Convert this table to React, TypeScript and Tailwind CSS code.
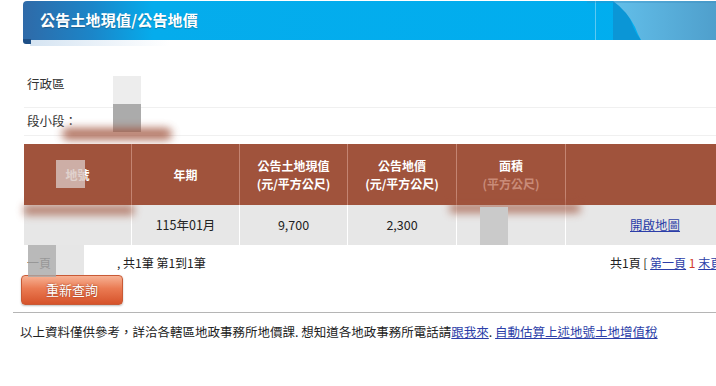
import React from 'react';

const cols = [
  { w: 'w-[108px]', h: ['地號'] },
  { w: 'w-[108px]', h: ['年期'] },
  { w: 'w-[108px]', h: ['公告土地現值', '(元/平方公尺)'] },
  { w: 'w-[109px]', h: ['公告地價', '(元/平方公尺)'] },
  { w: 'w-[109px]', h: ['面積', '(平方公尺)'] },
  { w: 'w-[160px]', h: [] },
];

export default function App() {
  return (
    <div className="relative w-[716px] h-[386px] overflow-hidden bg-white text-[#222] font-['Noto_Sans_CJK_TC','Noto_Sans',sans-serif]">
      {/* title bar */}
      <div className="relative ml-[23px] mt-[1px] h-[39px] rounded-tl-[4px] bg-[linear-gradient(90deg,#2f6aa8_0px,#1b86c9_70px,#05acec_130px,#00aeef_100%)] flex items-center pl-[17px]">
        <span className="text-white text-[15px] font-bold tracking-[0.2px] [text-shadow:0_1px_1px_rgba(0,0,0,0.25)]">
          公告土地現值/公告地價
        </span>
        <div className="absolute left-[572px] top-0 h-full w-px bg-[#5cc9f2]" />
        <svg className="absolute right-0 top-0" width="129" height="39" viewBox="0 0 129 39">
          <defs>
            <linearGradient id="lt" x1="0" x2="1" y1="0" y2="0">
              <stop offset="0" stopColor="#62bfea" />
              <stop offset="1" stopColor="#4f9fcc" />
            </linearGradient>
          </defs>
          <path d="M26 0 Q38 6 44 20 Q48 32 54 39 L26 39 Z" fill="#0b96d6" />
          <path d="M26 0 Q40 10 48 26 Q51 34 54 39 L129 39 L129 0 Z" fill="url(#lt)" />
          <rect x="0" y="0" width="129" height="2" fill="#3a8cc0" opacity="0.35" />
        </svg>
        <div className="absolute left-0 top-[38px] h-[5px] w-[8px] bg-[#1d4f86] rounded-bl-[3px]" />
      </div>
      <div className="ml-[30px] h-[6px] w-[140px] bg-[linear-gradient(90deg,#d5e4f2,#ffffff)]" />

      {/* query rows */}
      <div className="ml-[24px] mt-[16px] text-[12.5px] text-[#333]">
        <div className="h-[46px] flex items-center pl-[3px] border-b border-[#f0f0f0]">行政區</div>
        <div className="h-[28px] flex items-center pl-[3px] border-b border-[#f0f0f0]">段小段：</div>
      </div>

      {/* result table */}
      <div className="ml-[24px] mt-[8px] flex flex-col">
        <div className="flex h-[61px] bg-[#a0533c] text-white text-[12px] font-bold">
          {cols.map((c, i) => (
            <div
              key={i}
              className={`${c.w} shrink-0 flex flex-col items-center justify-center border-r border-[#c48472] last:border-r-0`}
            >
              {c.h.map((t) => (
                <span
                  key={t}
                  className={`block leading-[18px] ${i === 4 && t.startsWith('(') ? 'text-[#c98b78]' : ''}`}
                >
                  {t}
                </span>
              ))}
            </div>
          ))}
        </div>
        <div className="flex h-[40px] bg-[#e7e7e7] text-[12.5px] text-[#222]">
          <div className="w-[108px] shrink-0 border-r border-white" />
          <div className="w-[108px] shrink-0 flex items-center justify-center border-r border-white">115年01月</div>
          <div className="w-[108px] shrink-0 flex items-center justify-center border-r border-white">9,700</div>
          <div className="w-[109px] shrink-0 flex items-center justify-center border-r border-white">2,300</div>
          <div className="w-[109px] shrink-0 border-r border-white" />
          <div className="w-[160px] shrink-0 flex items-center pl-[64px]">
            <a className="text-[#2c3ea8] underline" href="#">開啟地圖</a>
          </div>
        </div>
      </div>

      {/* paging */}
      <div className="ml-[27px] mt-[11px] flex items-center h-[14px] text-[12px] text-[#222] whitespace-nowrap">
        <div className="w-[583px] shrink-0 flex">
          <span className="text-[#555]">一頁</span>
          <span className="ml-[66px]">, 共1筆 第1到1筆</span>
        </div>
        <span className="shrink-0">
          共1頁 [ <a className="text-[#2c3ea8] underline" href="#">第一頁</a>{' '}
          <span className="text-[#d23a2c]">1</span>{' '}
          <a className="text-[#2c3ea8] underline" href="#">末頁</a> ]
        </span>
      </div>

      <button className="ml-[21px] mt-[5px] w-[102px] h-[30px] rounded-[4px] border border-[#c85a36] bg-[linear-gradient(180deg,#f7b294_0%,#ea7a52_45%,#d6532b_100%)] text-white text-[13px] [text-shadow:0_0_2px_#8a2e12] shadow-[0_1px_2px_rgba(0,0,0,0.25)]">
        重新查詢
      </button>

      <div className="ml-[13px] mt-[7px] h-px bg-[#b5b5b5]" />

      <p className="ml-[20px] mt-[10px] text-[12.5px] text-[#222] whitespace-nowrap">
        以上資料僅供參考，詳洽各轄區地政事務所地價課. 想知道各地政事務所電話請
        <a className="text-[#2c3ea8] underline" href="#">跟我來</a>.{' '}
        <a className="text-[#2c3ea8] underline" href="#">自動估算上述地號土地增值稅</a>
      </p>

      {/* redaction marks */}
      <div className="absolute left-[113px] top-[76px] w-[28px] h-[28px] bg-[#ededed]" />
      <div className="absolute left-[113px] top-[104px] w-[28px] h-[28px] bg-[#ababab]" />
      <div className="absolute left-[62px] top-[128px] w-[110px] h-[12px] rounded-full bg-[#a0533c] blur-[4px] opacity-80" />
      <div className="absolute left-[56px] top-[160px] w-[29px] h-[28px] bg-[#d8c6c0] opacity-80" />
      <div className="absolute left-[24px] top-[205px] w-[110px] h-[10px] bg-[#a0533c] blur-[4px] opacity-70" />
      <div className="absolute left-[450px] top-[203px] w-[130px] h-[10px] bg-[#a0533c] blur-[4px] opacity-70" />
      <div className="absolute left-[480px] top-[207px] w-[28px] h-[38px] bg-[#cacaca]" />
      <div className="absolute left-[28px] top-[245px] w-[28px] h-[32px] bg-[#a8a8a8] opacity-80" />
      <div className="absolute left-[56px] top-[245px] w-[28px] h-[30px] bg-[#dcdcdc] opacity-70" />
    </div>
  );
}
